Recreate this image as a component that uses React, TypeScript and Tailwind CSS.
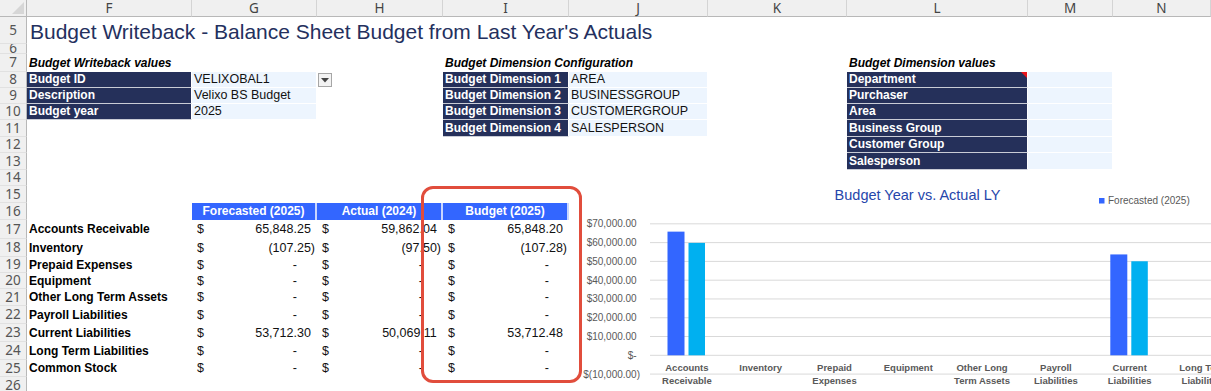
import React from "react";

const COLS = ["F", "G", "H", "I", "J", "K", "L", "M", "N"];

type Cells = Partial<Record<string, React.ReactNode>>;

function Row({ n, cells = {} }: { n: number; cells?: Cells }) {
  return (
    <>
      <div className="flex items-center justify-center overflow-hidden border-r border-b border-r-[#b8b8b8] border-b-[#e1e1e1] bg-[#f0f0f0] font-['Noto_Sans',sans-serif] text-[13.5px] leading-[15px] text-[#555]">
        {n}
      </div>
      {COLS.map((c) => (
        <React.Fragment key={c}>{cells[c] ?? <div />}</React.Fragment>
      ))}
    </>
  );
}

function Dark({ children, flag }: { children?: React.ReactNode; flag?: boolean }) {
  return (
    <div className="relative flex items-center whitespace-nowrap border-r border-b border-r-white border-b-[#c9ccd6] bg-[#25305a] pl-[2px] text-[12px] leading-[15px] font-bold text-white">
      {children}
      {flag && (
        <span className="absolute top-0 right-0 h-0 w-0 border-t-[6px] border-l-[6px] border-t-[#e8141b] border-l-transparent" />
      )}
    </div>
  );
}

function Light({ children }: { children?: React.ReactNode }) {
  return (
    <div className="flex items-center whitespace-nowrap border-r border-b border-white bg-[#edf5fe] pl-[2px] text-[12.5px] leading-[15px] text-[#111]">
      {children}
    </div>
  );
}

function Section({ children }: { children: React.ReactNode }) {
  return (
    <div className="flex items-center whitespace-nowrap pl-[2px] text-[12px] leading-[15px] font-bold text-black italic">
      {children}
    </div>
  );
}

function Label({ children }: { children: React.ReactNode }) {
  return (
    <div className="flex items-center whitespace-nowrap pl-[2px] text-[12px] leading-[15px] font-bold text-black">
      {children}
    </div>
  );
}

function Head({ children }: { children: React.ReactNode }) {
  return (
    <div className="flex items-center justify-center border-r-2 border-r-[#c9d6ff] bg-[#3366ff] text-[12px] leading-[15px] font-bold text-white">
      {children}
    </div>
  );
}

function Acct({ v }: { v: string }) {
  let shown: React.ReactNode;
  if (v === "-") {
    shown = (
      <>
        -<span className="invisible">00)</span>
      </>
    );
  } else if (v.startsWith("(")) {
    shown = v;
  } else {
    shown = (
      <>
        {v}
        <span className="invisible">)</span>
      </>
    );
  }
  return (
    <div className="flex items-center justify-between whitespace-nowrap pr-[2px] pl-[5px] text-[12.5px] leading-[15px] text-[#111]">
      <span>$</span>
      <span>{shown}</span>
    </div>
  );
}

const lines = [
  ["Accounts Receivable", "65,848.25", "59,862.04", "65,848.20"],
  ["Inventory", "(107.25)", "(97.50)", "(107.28)"],
  ["Prepaid Expenses", "-", "-", "-"],
  ["Equipment", "-", "-", "-"],
  ["Other Long Term Assets", "-", "-", "-"],
  ["Payroll Liabilities", "-", "-", "-"],
  ["Current Liabilities", "53,712.30", "50,069.11", "53,712.48"],
  ["Long Term Liabilities", "-", "-", "-"],
  ["Common Stock", "-", "-", "-"],
];

function Chart() {
  const y0 = 355.3;
  const step = 18.78;
  const yOf = (v: number) => y0 - (v / 10000) * step;
  const ticks: [number, string][] = [
    [70000, "$70,000.00"],
    [60000, "$60,000.00"],
    [50000, "$50,000.00"],
    [40000, "$40,000.00"],
    [30000, "$30,000.00"],
    [20000, "$20,000.00"],
    [10000, "$10,000.00"],
    [0, "$-"],
    [-10000, "$(10,000.00)"],
  ];
  const cats = [
    ["Accounts", "Receivable"],
    ["Inventory"],
    ["Prepaid", "Expenses"],
    ["Equipment"],
    ["Other Long", "Term Assets"],
    ["Payroll", "Liabilities"],
    ["Current", "Liabilities"],
    ["Long Term", "Liabilities"],
  ];
  const forecast = [65848.25, -107.25, 0, 0, 0, 0, 53712.3, 0];
  const actual = [59862.04, -97.5, 0, 0, 0, 0, 50069.11, 0];
  const catW = 73.8;
  const x0 = 650;
  const bar = (v: number, x: number, w: number, fill: string, key: string) => {
    const h = Math.abs(yOf(v) - y0);
    if (h < 1) return null;
    const y = v >= 0 ? yOf(v) : y0;
    return <rect key={key} x={x} y={y} width={w} height={h} fill={fill} />;
  };

  return (
    <div className="absolute top-[183px] left-[582px] h-[208px] w-[629px] bg-white">
      <svg width="629" height="208" viewBox="582 183 629 208" fontFamily="'Liberation Sans', Arial, sans-serif">
        <text x="917.5" y="200" textAnchor="middle" fontSize="14.5" fill="#2646ab">
          Budget Year vs. Actual LY
        </text>
        <rect x="1099" y="198" width="5.5" height="5.5" fill="#3366ff" />
        <text x="1108" y="204" fontSize="10" fill="#595959">
          Forecasted (2025)
        </text>
        {ticks.map(([v, label]) => (
          <g key={v}>
            <line x1={x0} x2="1211" y1={yOf(v)} y2={yOf(v)} stroke="#d9d9d9" strokeWidth="1" />
            <text
              x={v < 0 ? 640 : 636.7}
              y={yOf(v) + 3.5}
              textAnchor="end"
              fontSize="10"
              fill="#595959"
            >
              {label}
            </text>
          </g>
        ))}
        {cats.map((c, i) => {
          const start = x0 + i * catW;
          const cx = start + catW / 2;
          return (
            <g key={i}>
              {bar(forecast[i], start + 17.5, 17, "#3366ff", "f")}
              {bar(actual[i], start + 38.5, 16.5, "#00b0f0", "a")}
              {c.map((t, j) => (
                <text key={j} x={cx} y={371 + j * 12.5} textAnchor="middle" fontSize="9.5" fontWeight="bold" fill="#595959">
                  {t}
                </text>
              ))}
            </g>
          );
        })}
      </svg>
    </div>
  );
}

export default function App() {
  return (
    <div className="relative h-[391px] w-[1211px] overflow-hidden bg-white font-['Liberation_Sans',Arial,sans-serif]">
      <div className="grid grid-cols-[27px_165px_125px_126px_126px_139px_139px_181px_85px_98px] grid-rows-[17px_27px_10px_18px_16px_16px_16px_17px_16px_17px_16px_17px_17px_19px_18px_16px_16px_17px_18px_18px_18px_17px_17px]">
        {/* column headers */}
        <div className="relative border-r border-b border-r-[#b8b8b8] border-b-[#b8b8b8] bg-[#f0f0f0]">
          <svg className="absolute right-[2px] bottom-[2px]" width="12" height="12">
            <polygon points="12,0 12,12 0,12" fill="#d6d6d6" />
          </svg>
        </div>
        {COLS.map((c) => (
          <div
            key={c}
            className="flex items-center justify-center border-r border-b border-r-[#d4d4d4] border-b-[#b8b8b8] bg-[#f0f0f0] font-['Noto_Sans',sans-serif] text-[13.5px] leading-[16px] text-[#444]"
          >
            {c}
          </div>
        ))}

        <Row
          n={5}
          cells={{
            F: (
              <div className="flex items-center pt-[3px] pl-[3px] text-[21px] leading-[24px] whitespace-nowrap text-[#24305e]">
                Budget Writeback - Balance Sheet Budget from Last Year's Actuals
              </div>
            ),
          }}
        />
        <Row n={6} />
        <Row
          n={7}
          cells={{
            F: <Section>Budget Writeback values</Section>,
            I: <Section>Budget Dimension Configuration</Section>,
            L: <Section>Budget Dimension values</Section>,
          }}
        />
        <Row
          n={8}
          cells={{
            F: <Dark>Budget ID</Dark>,
            G: <Light>VELIXOBAL1</Light>,
            I: <Dark>Budget Dimension 1</Dark>,
            J: <Light>AREA</Light>,
            L: <Dark flag>Department</Dark>,
            M: <Light />,
          }}
        />
        <Row
          n={9}
          cells={{
            F: <Dark>Description</Dark>,
            G: <Light>Velixo BS Budget</Light>,
            I: <Dark>Budget Dimension 2</Dark>,
            J: <Light>BUSINESSGROUP</Light>,
            L: <Dark>Purchaser</Dark>,
            M: <Light />,
          }}
        />
        <Row
          n={10}
          cells={{
            F: <Dark>Budget year</Dark>,
            G: <Light>2025</Light>,
            I: <Dark>Budget Dimension 3</Dark>,
            J: <Light>CUSTOMERGROUP</Light>,
            L: <Dark>Area</Dark>,
            M: <Light />,
          }}
        />
        <Row
          n={11}
          cells={{
            I: <Dark>Budget Dimension 4</Dark>,
            J: <Light>SALESPERSON</Light>,
            L: <Dark>Business Group</Dark>,
            M: <Light />,
          }}
        />
        <Row n={12} cells={{ L: <Dark>Customer Group</Dark>, M: <Light /> }} />
        <Row n={13} cells={{ L: <Dark>Salesperson</Dark>, M: <Light /> }} />
        <Row n={14} />
        <Row n={15} />
        <Row
          n={16}
          cells={{
            G: <Head>Forecasted (2025)</Head>,
            H: <Head>Actual (2024)</Head>,
            I: <Head>Budget (2025)</Head>,
          }}
        />
        {lines.map(([label, f, a, b], i) => (
          <Row
            key={label}
            n={17 + i}
            cells={{
              F: <Label>{label}</Label>,
              G: <Acct v={f} />,
              H: <Acct v={a} />,
              I: <Acct v={b} />,
            }}
          />
        ))}
        <Row n={26} />
      </div>

      {/* data validation dropdown on G8 */}
      <div className="absolute top-[73px] left-[318px] flex h-[14px] w-[14px] items-center justify-center border border-[#a6a6a6] bg-[#f3f3f3]">
        <svg width="8" height="5">
          <polygon points="0,0 8,0 4,4.5" fill="#444" />
        </svg>
      </div>

      <Chart />

      {/* highlight around the budget column */}
      <div className="absolute top-[186px] left-[421px] h-[197px] w-[161px] rounded-[12px] border-[3.5px] border-[#e14d3c]" />
    </div>
  );
}
